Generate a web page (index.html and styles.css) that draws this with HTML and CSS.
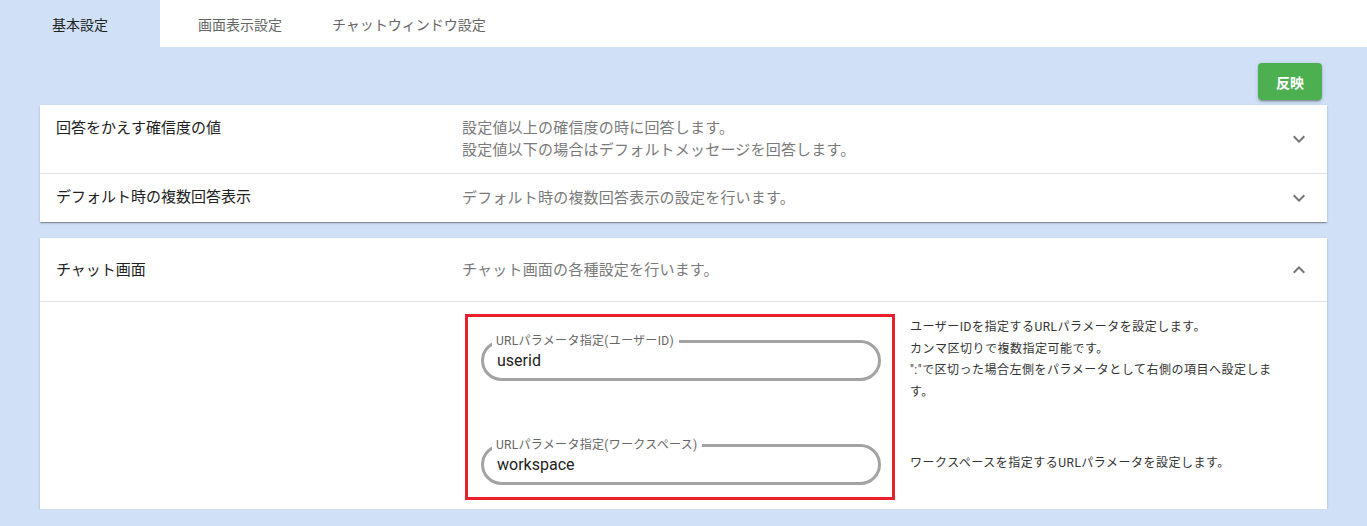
FILE: index.html
```html
<!DOCTYPE html>
<html lang="ja">
<head>
<meta charset="utf-8">
<title>設定</title>
<link rel="stylesheet" href="styles.css">
</head>
<body>
<nav class="tabs">
  <div class="tab tab-active">基本設定</div>
  <div class="tab">画面表示設定</div>
  <div class="tab">チャットウィンドウ設定</div>
</nav>

<div class="toolbar">
  <button class="btn-apply">反映</button>
</div>

<section class="panel">
  <div class="row row-border">
    <div class="row-title">回答をかえす確信度の値</div>
    <div class="row-desc">設定値以上の確信度の時に回答します。<br>設定値以下の場合はデフォルトメッセージを回答します。</div>
    <svg class="chev" viewBox="0 0 24 24" width="24" height="24"><path d="M16.59 8.59L12 13.17 7.41 8.59 6 10l6 6 6-6z"/></svg>
  </div>
  <div class="row">
    <div class="row-title">デフォルト時の複数回答表示</div>
    <div class="row-desc">デフォルト時の複数回答表示の設定を行います。</div>
    <svg class="chev" viewBox="0 0 24 24" width="24" height="24"><path d="M16.59 8.59L12 13.17 7.41 8.59 6 10l6 6 6-6z"/></svg>
  </div>
</section>

<section class="panel panel-open">
  <div class="row row-head row-border">
    <div class="row-title">チャット画面</div>
    <div class="row-desc">チャット画面の各種設定を行います。</div>
    <svg class="chev" viewBox="0 0 24 24" width="24" height="24"><path d="M12 8l-6 6 1.41 1.41L12 10.83l4.59 4.58L18 14z"/></svg>
  </div>
  <div class="panel-body">
    <div class="highlight"></div>
    <div class="field field-1">
      <span class="field-label">URLパラメータ指定(ユーザーID)</span>
      <span class="field-value">userid</span>
    </div>
    <div class="help help-1">ユーザーIDを指定するURLパラメータを設定します。<br>カンマ区切りで複数指定可能です。<br>":"で区切った場合左側をパラメータとして右側の項目へ設定します。</div>
    <div class="field field-2">
      <span class="field-label">URLパラメータ指定(ワークスペース)</span>
      <span class="field-value">workspace</span>
    </div>
    <div class="help help-2">ワークスペースを指定するURLパラメータを設定します。</div>
  </div>
</section>
</body>
</html>
```

FILE: styles.css
```css
html, body {
  margin: 0;
  padding: 0;
}
body {
  background: #cfe0f7;
  font-family: "Roboto", "Noto Sans CJK JP", sans-serif;
  color: #212121;
  overflow: hidden;
}

.tabs {
  display: flex;
  height: 47px;
  background: #ffffff;
}
.tab {
  min-width: 160px;
  box-sizing: border-box;
  padding: 0 12px;
  display: flex;
  align-items: center;
  justify-content: center;
  font-size: 14px;
  color: #666666;
}
.tab-active {
  background: #cfe0f7;
  color: #222222;
}

.toolbar {
  display: flex;
  justify-content: flex-end;
  padding: 16px 45px 5px 0;
}
.btn-apply {
  width: 64px;
  height: 37px;
  border: none;
  border-radius: 4px;
  background: #4caf50;
  color: #ffffff;
  font-family: "Roboto", "Noto Sans CJK JP", sans-serif;
  font-size: 14px;
  font-weight: 700;
  box-shadow: 0 3px 1px -2px rgba(0,0,0,.2), 0 2px 2px 0 rgba(0,0,0,.14), 0 1px 5px 0 rgba(0,0,0,.12);
}

.panel {
  margin: 0 40px;
  background: #ffffff;
  box-shadow: 0 2px 1px -1px rgba(0,0,0,.2), 0 1px 1px 0 rgba(0,0,0,.14), 0 1px 3px 0 rgba(0,0,0,.12);
}
.panel-open {
  margin-top: 16px;
}

.row {
  display: grid;
  grid-template-columns: 406px 1fr 24px;
  align-items: center;
  padding: 12px 16px;
  font-size: 15px;
  line-height: 22px;
}
.row-border {
  border-bottom: 1px solid #e0e0e0;
}
.row-head {
  height: 64px;
  box-sizing: border-box;
}
.row-title {
  color: #212121;
  align-self: start;
}
.row-head .row-title { align-self: center; }
.row-desc {
  color: #7a7a7a;
  letter-spacing: 0.2px;
}
.chev {
  fill: #757575;
}

.panel-body {
  display: grid;
  grid-template-columns: 425px 430px 370px;
  grid-template-rows: 104px 82px;
  padding: 12px 0 9px;
}
.highlight {
  grid-column: 2;
  grid-row: 1 / 3;
  border: 3px solid #e8202a;
}
.field {
  grid-column: 2;
  position: relative;
  margin: 26px 14px 0 16px;
  height: 41px;
  box-sizing: border-box;
  border: 3px solid #a3a3a3;
  border-radius: 21px;
  display: flex;
  align-items: center;
  padding-left: 13px;
}
.field-1 { grid-row: 1; align-self: start; }
.field-2 { grid-row: 2; align-self: start; }
.field-label {
  position: absolute;
  left: 8px;
  top: -9px;
  padding: 0 5px 0 4px;
  background: #ffffff;
  font-size: 12px;
  line-height: 14px;
  letter-spacing: 0.3px;
  color: #666666;
}
.field-value {
  font-size: 16px;
  color: #222222;
}

.help {
  grid-column: 3;
  padding-left: 15px;
  width: 368px;
  font-size: 12px;
  line-height: 21.7px;
  letter-spacing: 0.5px;
  color: #333333;
  box-sizing: content-box;
}
.help-1 { grid-row: 1; padding-top: 3px; }
.help-2 { grid-row: 2; padding-top: 35px; }
```
